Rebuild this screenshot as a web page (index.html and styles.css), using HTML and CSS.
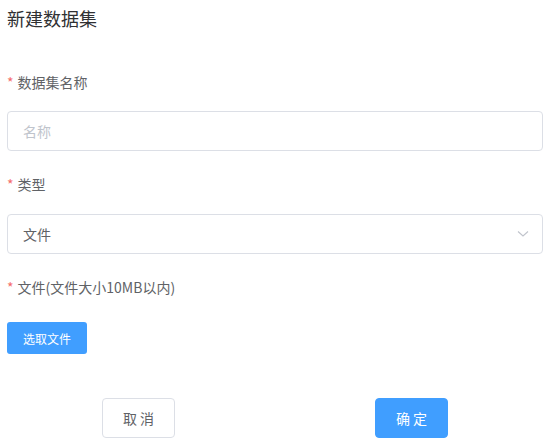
FILE: index.html
```html
<!DOCTYPE html>
<html lang="zh">
<head>
<meta charset="utf-8">
<title>新建数据集</title>
<link rel="stylesheet" href="styles.css">
</head>
<body>
<div class="dialog">
  <div class="title">新建数据集</div>
  <div class="form">
    <div class="label"><span class="req">*</span>数据集名称</div>
    <div class="input"><span class="placeholder">名称</span></div>
    <div class="label l2"><span class="req">*</span>类型</div>
    <div class="input select">
      <span class="value">文件</span>
      <svg class="chev" width="12" height="8" viewBox="0 0 12 8"><path d="M1 1.5 L6 6 L11 1.5" fill="none" stroke="#C0C4CC" stroke-width="1.1"/></svg>
    </div>
    <div class="label l3"><span class="req">*</span>文件(文件大小10MB以内)</div>
    <div><button class="btn-upload">选取文件</button></div>
  </div>
  <div class="footer">
    <button class="btn btn-default">取 消</button>
    <button class="btn btn-primary">确 定</button>
  </div>
</div>
</body>
</html>
```
FILE: styles.css
```css
html, body {
  margin: 0;
  padding: 0;
  background: #fff;
}
body {
  font-family: "Noto Sans CJK SC", "Noto Sans", sans-serif;
  color: #606266;
}
.dialog {
  padding: 6px 8px 0 7px;
}
.title {
  font-size: 18px;
  line-height: 24px;
  color: #303133;
}
.form {
  display: flex;
  flex-direction: column;
  margin-top: 42px;
}
.label {
  font-size: 14px;
  line-height: 20px;
  color: #606266;
  margin-bottom: 19px;
}
.label.l2 {
  margin-top: 23px;
  margin-bottom: 20px;
}
.label.l3 {
  margin-top: 23px;
  margin-bottom: 25px;
}
.req {
  color: #F56C6C;
  margin-right: 4px;
  font-size: 14px;
}
.input {
  box-sizing: border-box;
  height: 40px;
  border: 1px solid #DCDFE6;
  border-radius: 4px;
  padding: 0 15px;
  display: flex;
  align-items: center;
  font-size: 14px;
}
.placeholder {
  color: #C0C4CC;
}
.select {
  justify-content: space-between;
}
.value {
  color: #606266;
}
.chev {
  margin-right: -2px;
}
.btn-upload {
  box-sizing: border-box;
  width: 80px;
  height: 32px;
  border: none;
  border-radius: 3px;
  background: #409EFF;
  color: #fff;
  font-family: inherit;
  font-size: 12px;
  padding: 0;
}
.footer {
  display: flex;
  gap: 200px;
  padding-left: 95px;
  margin-top: 44px;
}
.btn {
  box-sizing: border-box;
  width: 73px;
  height: 40px;
  border-radius: 4px;
  font-family: inherit;
  font-size: 14px;
  padding: 0;
}
.btn-default {
  background: #fff;
  border: 1px solid #DCDFE6;
  color: #606266;
}
.btn-primary {
  background: #409EFF;
  border: 1px solid #409EFF;
  color: #fff;
}
```
